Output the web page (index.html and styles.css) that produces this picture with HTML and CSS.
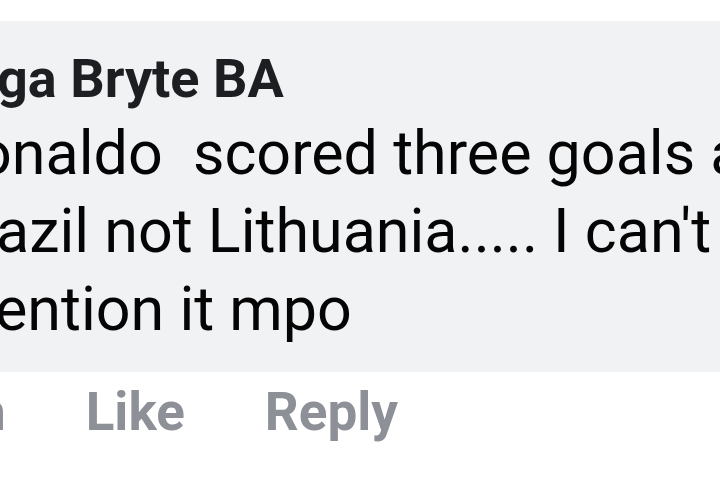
FILE: index.html
```html
<!DOCTYPE html>
<html lang="en">
<head>
  <meta charset="UTF-8" />
  <title>Comment</title>
  <link rel="stylesheet" href="styles.css">
</head>
<body>
  <div class="comment">
    <div class="bubble">
      <div class="author">ga Bryte BA</div>
      <div class="line line-1">onaldo&nbsp; scored three goals a</div>
      <div class="line line-2">azil not Lithuania..... I can't</div>
      <div class="line line-3">ention it mpo</div>
    </div>
    <div class="actions">
      <span class="time">h</span>
      <span class="like">Like</span>
      <span class="reply">Reply</span>
    </div>
  </div>
</body>
</html>
```

FILE: styles.css
```css
body {
  margin: 0;
  background: #ffffff;
  font-family: Roboto, "Liberation Sans", sans-serif;
  overflow: hidden;
  width: 720px;
  height: 480px;
}

.comment {
  padding-top: 21px;
}

.bubble {
  background: #f0f2f4;
  padding: 28px 0 22px 0;
  height: 301px;
}

.author {
  font-size: 54px;
  line-height: 60px;
  font-weight: 700;
  color: #1c1e21;
  margin-left: -3px;
  white-space: nowrap;
}

.line {
  font-size: 61px;
  line-height: 78px;
  color: #050505;
  white-space: nowrap;
}

.author + .line {
  margin-top: 5px;
}

.line-1 {
  margin-left: -23px;
}

.line-2 {
  margin-left: -4px;
}

.line-3 {
  margin-left: -5px;
}

.actions {
  display: flex;
  margin-top: 10px;
  font-size: 53px;
  line-height: 60px;
  font-weight: 700;
  color: #8d9096;
  white-space: nowrap;
}

.time {
  margin-left: -24px;
}

.like {
  margin-left: 80px;
}

.reply {
  margin-left: 80px;
}
```
